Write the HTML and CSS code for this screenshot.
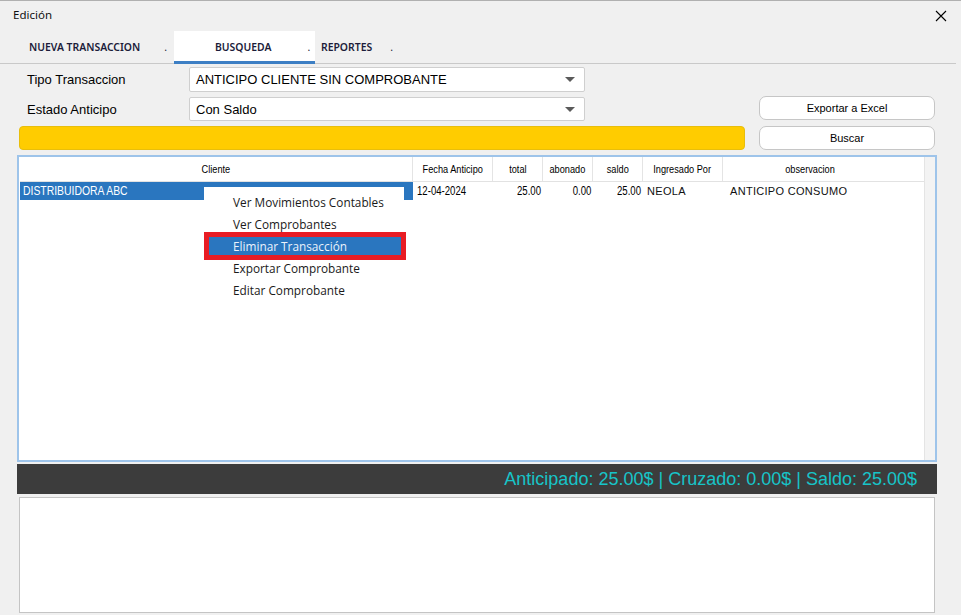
FILE: index.html
```html
<!DOCTYPE html>
<html lang="es">
<head>
    <meta charset="UTF-8">
    <title>Edición</title>
    <link rel="stylesheet" href="styles.css">
</head>
<body>
<div class="window">
    <div class="titlebar">
        <span class="title">Edición</span>
        <svg class="close" width="12" height="12" viewBox="0 0 12 12">
            <path d="M1 1 L11 11 M11 1 L1 11" stroke="#000" stroke-width="1.1" fill="none"/>
        </svg>
    </div>
    <nav class="tabs">
        <a href="javascript://" class="tab tab1">NUEVA TRANSACCION<span class="dot">.</span></a>
        <a href="javascript://" class="tab tab2 cur">BUSQUEDA<span class="dot">.</span></a>
        <a href="javascript://" class="tab tab3">REPORTES<span class="dot">.</span></a>
    </nav>
    <div class="form">
        <label class="lbl row1">Tipo Transaccion</label>
        <div class="select row1">ANTICIPO CLIENTE SIN COMPROBANTE<i class="arrow"></i></div>
        <label class="lbl row2">Estado Anticipo</label>
        <div class="select row2">Con Saldo<i class="arrow"></i></div>
        <button class="btn row2">Exportar a Excel</button>
        <div class="status"></div>
        <button class="btn row3">Buscar</button>
    </div>
    <div class="grid">
        <div class="grid-main">
            <div class="head">
                <div class="c-cli"><span class="n">Cliente</span></div>
                <div class="c-fec"><span class="n">Fecha Anticipo</span></div>
                <div class="c-num"><span class="n">total</span></div>
                <div class="c-num"><span class="n">abonado</span></div>
                <div class="c-num"><span class="n">saldo</span></div>
                <div class="c-ing"><span class="n">Ingresado Por</span></div>
                <div class="c-obs"><span class="n">observacion</span></div>
            </div>
            <div class="row">
                <div class="c-cli sel"><span class="n">DISTRIBUIDORA ABC</span></div>
                <div class="c-fec"><span class="n">12-04-2024</span></div>
                <div class="c-num"><span class="n">25.00</span></div>
                <div class="c-num"><span class="n">0.00</span></div>
                <div class="c-num"><span class="n">25.00</span></div>
                <div class="c-ing txt">NEOLA</div>
                <div class="c-obs txt">ANTICIPO CONSUMO</div>
            </div>
        </div>
        <div class="grid-side"></div>
        <ul class="menu">
            <li>Ver Movimientos Contables</li>
            <li>Ver Comprobantes</li>
            <li class="cur">Eliminar Transacción</li>
            <li>Exportar Comprobante</li>
            <li>Editar Comprobante</li>
        </ul>
    </div>
    <div class="totals">Anticipado: 25.00$ | Cruzado: 0.00$ | Saldo: 25.00$</div>
    <div class="notes"></div>
</div>
</body>
</html>
```
FILE: styles.css
```css
*{
    box-sizing: border-box;
}
html,body,div,nav,a,ul,li,label,button{
    margin: 0;
    padding: 0;
    list-style: none;
}
body{
    width: 961px;
    height: 615px;
    overflow: hidden;
    background-color: #f0f0f0;
    font-family: "Liberation Sans", Arial, sans-serif;
    color: #000;
}
.window{
    height: 615px;
    border-top: 1px solid #b0b0b0;
}
.titlebar{
    height: 30px;
    display: flex;
    align-items: center;
    justify-content: space-between;
    padding: 0 14px 3px 13px;
}
.title{
    font-family: "Noto Sans", sans-serif;
    font-size: 11.5px;
    color: #111;
}
.close{
    margin-top: 2px;
}
.tabs{
    display: flex;
    height: 33px;
    margin-right: 5px;
    border-bottom: 1px solid #c9c9c9;
}
.tab{
    display: block;
    height: 32px;
    line-height: 32px;
    font-family: "Noto Sans", sans-serif;
    font-size: 10.4px;
    font-weight: 600;
    color: #1c1c3a;
    text-decoration: none;
}
.dot{
    font-weight: 400;
}
.tab1{
    width: 174px;
    padding-left: 29px;
}
.tab1 .dot{
    margin-left: 24px;
}
.tab2{
    width: 141px;
    padding-left: 41px;
}
.tab2 .dot{
    margin-left: 36px;
}
.tab3{
    padding-left: 6px;
}
.tab3 .dot{
    margin-left: 18px;
}
.tab.cur{
    height: 33px;
    margin-bottom: -1px;
    background-color: #fff;
    border-bottom: 3px solid #3d7fc4;
}
.form{
    display: grid;
    grid-template-columns: 170px 396px 160px 14px 176px;
    grid-template-rows: 25px 24px 24px;
    row-gap: 5px;
    margin: 3px 0 0 19px;
}
.row1{
    grid-row: 1;
}
.row2{
    grid-row: 2;
}
.row3{
    grid-row: 3;
}
.lbl{
    grid-column: 1;
    padding-left: 8px;
    font-size: 13px;
    line-height: 25px;
}
.select{
    grid-column: 2;
    position: relative;
    background-color: #fff;
    border: 1px solid #cfcfcf;
    border-radius: 2px;
    padding-left: 6px;
    font-size: 13px;
    line-height: 23px;
}
.arrow{
    position: absolute;
    right: 9px;
    top: 9px;
    width: 0;
    height: 0;
    border-left: 5px solid transparent;
    border-right: 5px solid transparent;
    border-top: 5px solid #5a5a5a;
}
.btn{
    grid-column: 5;
    height: 24px;
    margin-top: -1px;
    background-color: #fff;
    border: 1px solid #c6c6c6;
    border-radius: 7px;
    font-family: "Liberation Sans", Arial, sans-serif;
    font-size: 11px;
    color: #000;
}
.btn.row3{
    margin-top: 0;
}
.status{
    grid-column: 1 / 4;
    grid-row: 3;
    background-color: #ffcc00;
    border: 1px solid #e8be0c;
    border-radius: 4px;
}
.grid{
    position: relative;
    display: flex;
    height: 307px;
    margin: 5px 24px 0 17px;
    border: 2px solid #9ec4ea;
}
.grid-main{
    flex: 1;
    padding-left: 1px;
    background-color: #fff;
}
.grid-side{
    width: 11px;
    background-color: #f3f3f3;
    border-left: 1px solid #e4e4e4;
}
.head,.row{
    display: flex;
    font-size: 12px;
}
/* narrow text: the grid uses a condensed face */
.n{
    display: inline-block;
    white-space: nowrap;
    transform: scaleX(0.8);
}
.head{
    height: 25px;
    border-bottom: 1px solid #e2e2e2;
}
.head div{
    line-height: 24px;
    text-align: center;
    border-right: 1px solid #e4e4e4;
    font-size: 11.5px;
}
.head .c-obs{
    border-right: none;
    padding-right: 26px;
}
.row{
    height: 18px;
    line-height: 18px;
}
.c-cli{
    width: 393px;
}
.c-fec{
    width: 80px;
}
.c-num{
    width: 50px;
}
.c-ing{
    width: 80px;
}
.c-obs{
    width: 201px;
}
.row div{
    padding-left: 4px;
    white-space: nowrap;
}
.row .n{
    transform-origin: left center;
}
.row .c-num{
    text-align: right;
    padding: 0 2px 0 0;
}
.row .c-num .n{
    transform-origin: right center;
}
.row .sel{
    padding-left: 3px;
    background-color: #2a76bf;
    color: #fff;
    font-size: 13px;
}
.row .txt{
    font-size: 11px;
    letter-spacing: 0.3px;
    color: #111;
}
.row .c-obs{
    padding-left: 7px;
}
.menu{
    position: absolute;
    left: 185px;
    top: 30px;
    width: 200px;
    height: 118px;
    padding-top: 4px;
    background-color: #fff;
    font-family: "Open Sans", sans-serif;
    font-size: 11.8px;
    color: #1a1a1a;
}
.menu li{
    height: 22px;
    line-height: 22px;
    padding-left: 29px;
}
.menu li.cur{
    height: 18px;
    line-height: 18px;
    margin: 2px 3px 2px 5px;
    padding-left: 24px;
    background-color: #2a76bf;
    color: #eaf2fb;
    outline: 5px solid #e81c24;
}
.totals{
    height: 30px;
    margin: 2px 24px 0 17px;
    padding-right: 20px;
    background-color: #3c3c3c;
    color: #17c4c8;
    font-size: 18px;
    line-height: 30px;
    text-align: right;
}
.notes{
    height: 116px;
    margin: 3px 26px 0 19px;
    background-color: #fff;
    border: 1px solid #c4c4c4;
}
```
